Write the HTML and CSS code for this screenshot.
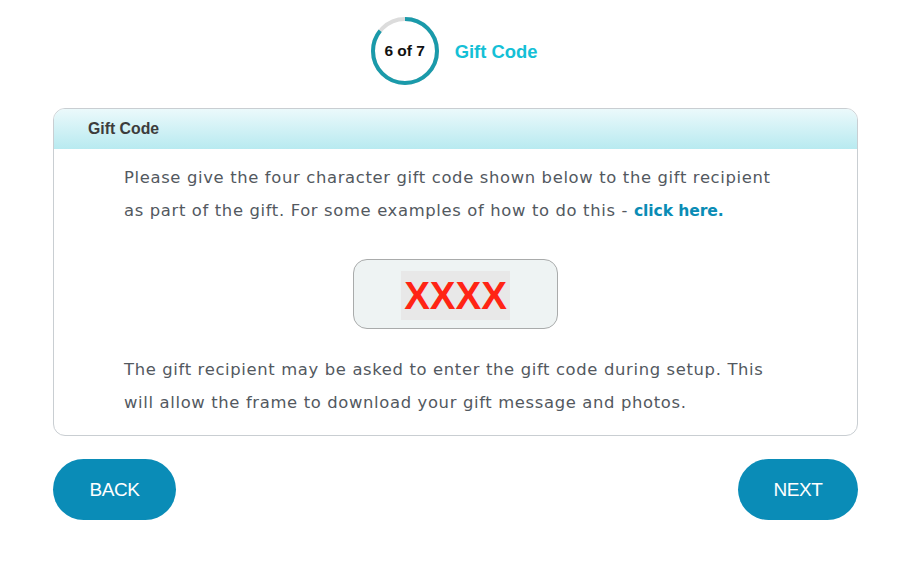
FILE: index.html
```html
<!DOCTYPE html>
<html lang="en">
<head>
<meta charset="utf-8">
<title>Gift Code</title>
<link rel="stylesheet" href="styles.css">
</head>
<body>
<div class="page">
  <div class="stepper">
    <div class="ring">
      <svg width="68" height="68" viewBox="0 0 68 68">
        <circle cx="34" cy="34" r="32" fill="none" stroke="#dcdcdc" stroke-width="4"/>
        <circle cx="34" cy="34" r="32" fill="none" stroke="#1a9aaa" stroke-width="4" stroke-dasharray="172.34 201.06" transform="rotate(-90 34 34)"/>
      </svg>
      <span class="ring-label">6 of 7</span>
    </div>
    <span class="step-title">Gift Code</span>
  </div>

  <div class="card">
    <div class="card-header">Gift Code</div>
    <div class="card-body">
      <p class="text">Please give the four character gift code shown below to the gift recipient as part of the gift. For some examples of how to do this - <a class="link" href="#">click here.</a></p>
      <div class="code-row">
        <div class="code-box"><span class="code">XXXX</span></div>
      </div>
      <p class="text text-after">The gift recipient may be asked to enter the gift code during setup. This will allow the frame to download your gift message and photos.</p>
    </div>
  </div>

  <div class="actions">
    <button class="btn btn-back">BACK</button>
    <button class="btn btn-next">NEXT</button>
  </div>
</div>
</body>
</html>
```

FILE: styles.css
```css
html, body {
  margin: 0;
  padding: 0;
  background: #ffffff;
}

.page {
  width: 805px;
  margin-left: 53px;
  padding-top: 17px;
  font-family: "Liberation Sans", Arial, sans-serif;
}

.stepper {
  display: flex;
  align-items: center;
  justify-content: center;
  gap: 16px;
  padding-right: 3px;
}

.ring {
  position: relative;
  width: 68px;
  height: 68px;
}

.ring svg {
  display: block;
}

.ring-label {
  position: absolute;
  inset: 0;
  display: flex;
  align-items: center;
  justify-content: center;
  font-weight: bold;
  font-size: 15.5px;
  color: #111111;
}

.step-title {
  font-weight: bold;
  font-size: 18.4px;
  color: #14c0d6;
  padding-top: 1px;
}

.card {
  margin-top: 23px;
  border: 1px solid #c9ced2;
  border-radius: 12px;
  overflow: hidden;
}

.card-header {
  height: 40px;
  display: flex;
  align-items: center;
  padding-left: 34px;
  font-weight: bold;
  font-size: 15.8px;
  color: #3c3c3c;
  background: linear-gradient(to bottom, #ebf9fb 0%, #b8eaf0 100%);
}

.card-body {
  padding: 12px 70px 16px 70px;
  font-family: "DejaVu Sans", "Liberation Sans", sans-serif;
}

.text {
  margin: 0;
  font-size: 16.4px;
  letter-spacing: 0.65px;
  line-height: 33px;
  color: #53595f;
}

.link {
  color: #0a8cb5;
  font-weight: 700;
  font-size: 15.6px;
  line-height: 1;
  letter-spacing: -0.1px;
  text-decoration: none;
}

.code-row {
  display: flex;
  justify-content: center;
  margin-top: 32px;
}

.code-box {
  width: 203px;
  height: 65px;
  padding-top: 3px;
  border: 1px solid #a9abab;
  border-radius: 14px;
  background: #eef3f3;
  display: flex;
  align-items: center;
  justify-content: center;
}

.code {
  display: block;
  background: #e8e8e8;
  padding: 0 3px;
  height: 49px;
  line-height: 49px;
  font-family: "Liberation Sans", Arial, sans-serif;
  font-weight: bold;
  font-size: 38.5px;
  color: #ff2414;
}

.text-after {
  margin-top: 24px;
}

.actions {
  margin-top: 23px;
  display: flex;
  justify-content: space-between;
}

.btn {
  height: 61px;
  border: none;
  border-radius: 31px;
  background: #0a8cb7;
  color: #ffffff;
  font-family: "Liberation Sans", Arial, sans-serif;
  font-size: 19px;
  letter-spacing: -0.4px;
  cursor: pointer;
}

.btn-back {
  width: 123px;
}

.btn-next {
  width: 120px;
}
```
